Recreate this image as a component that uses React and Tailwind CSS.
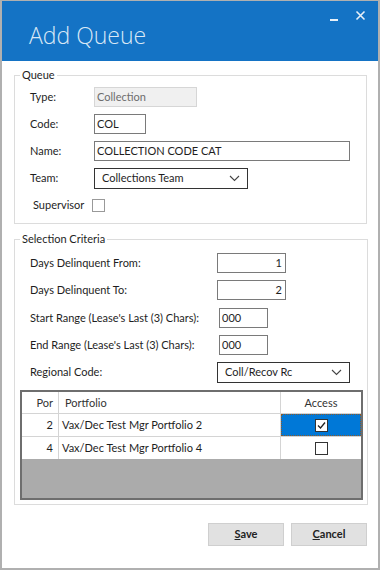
import React from "react";

function Row({ label, labelW, children, mb = "mb-[7px]" }) {
  return (
    <div className={`flex items-center h-[20px] ${mb}`}>
      <div className="shrink-0" style={{ width: labelW }}>
        {label}
      </div>
      {children}
    </div>
  );
}

function Check({ checked }) {
  return (
    <div className="w-[13px] h-[13px] border border-[#333] bg-white flex items-center justify-center">
      {checked && (
        <svg width="11" height="11" viewBox="0 0 11 11">
          <path d="M2 5.5 L4.5 8 L9 2.5" fill="none" stroke="#222" strokeWidth="1.3" />
        </svg>
      )}
    </div>
  );
}

function Chevron() {
  return (
    <svg width="11" height="7" viewBox="0 0 11 7" className="ml-auto mr-[7px]">
      <path d="M1 1 L5.5 5.5 L10 1" fill="none" stroke="#444" strokeWidth="1.1" />
    </svg>
  );
}

export default function App() {
  return (
    <div className="w-[380px] h-[570px] bg-white border-x-2 border-b-2 border-t border-[#b0b0b0] flex flex-col font-['Lato',sans-serif] text-[11px] text-[#1e1e1e] overflow-hidden">
      <div className="h-[60px] bg-[#1473c5] shrink-0 relative flex items-end pl-[27px] pb-[14px]">
        <span className="font-['Open_Sans',sans-serif] text-[23px] font-light leading-none text-[#d9e8f6]">Add Queue</span>
        <div className="absolute top-[9px] right-[12px] flex items-center gap-[17px] text-[#e8f0f8]">
          <div className="w-[8px] h-[2px] bg-[#e8f0f8] mt-[8px]" />
          <svg width="11" height="11" viewBox="0 0 11 11">
            <path d="M1.5 1.5 L9.5 9.5 M9.5 1.5 L1.5 9.5" stroke="#e8f0f8" strokeWidth="1.6" />
          </svg>
        </div>
      </div>

      <fieldset className="ml-[12px] mt-[6px] w-[353px] border border-[#dcdcdc] pl-[15px] pr-[15px] pb-[11px]">
        <legend className="-ml-[10px] px-[2px] leading-[16px]">Queue</legend>
        <div className="mt-[4px]">
          <Row label="Type:" labelW={64}>
            <div className="w-[103px] h-[20px] bg-[#f0f0f0] border border-[#d6d6d6] text-[#6d6d6d] px-[2px] leading-[18px]">
              Collection
            </div>
          </Row>
          <Row label="Code:" labelW={64}>
            <div className="w-[52px] h-[20px] border border-[#7a7a7a] px-[2px] leading-[18px]">COL</div>
          </Row>
          <Row label="Name:" labelW={64}>
            <div className="w-[256px] h-[20px] border border-[#7a7a7a] px-[2px] leading-[18px]">
              COLLECTION CODE CAT
            </div>
          </Row>
          <Row label="Team:" labelW={64} mb="mb-[10px]">
            <div className="w-[154px] h-[21px] border border-[#333] flex items-center pl-[7px]">
              Collections Team
              <Chevron />
            </div>
          </Row>
          <div className="flex items-center h-[14px] pl-[3px]">
            <span>Supervisor</span>
            <div className="ml-[8px] w-[13px] h-[13px] border border-[#999] bg-white" />
          </div>
        </div>
      </fieldset>

      <fieldset className="ml-[12px] mt-[7px] w-[353px] border border-[#dcdcdc] pl-[15px] pr-[4px] pb-[4px]">
        <legend className="-ml-[10px] px-[2px] leading-[16px]">Selection Criteria</legend>
        <div className="mt-[6px]">
          <Row label="Days Delinquent From:" labelW={187}>
            <div className="w-[69px] h-[20px] border border-[#7a7a7a] px-[3px] leading-[18px] text-right">1</div>
          </Row>
          <Row label="Days Delinquent To:" labelW={187} mb="mb-[8px]">
            <div className="w-[69px] h-[20px] border border-[#7a7a7a] px-[3px] leading-[18px] text-right">2</div>
          </Row>
          <Row label="Start Range (Lease's Last (3) Chars):" labelW={189}>
            <div className="w-[49px] h-[20px] border border-[#7a7a7a] px-[2px] leading-[18px]">000</div>
          </Row>
          <Row label="End Range (Lease's Last (3) Chars):" labelW={189}>
            <div className="w-[49px] h-[20px] border border-[#7a7a7a] px-[2px] leading-[18px]">000</div>
          </Row>
          <Row label="Regional Code:" labelW={187} mb="mb-[8px]">
            <div className="w-[133px] h-[21px] border border-[#333] flex items-center pl-[7px]">
              Coll/Recov Rc
              <Chevron />
            </div>
          </Row>
        </div>
        <div className="-ml-[10px] w-[343px] h-[110px] border-2 border-[#6e6e6e] bg-[#ababab] flex flex-col">
          <div className="flex h-[22px] bg-white border-b border-[#d4d4d4]">
            <div className="w-[37px] border-r border-[#d4d4d4] text-right pr-[5px] leading-[21px] text-[#333]">Por</div>
            <div className="w-[222px] border-r border-[#d4d4d4] pl-[6px] leading-[21px] text-[#333]">Portfolio</div>
            <div className="flex-1 text-center leading-[21px] text-[#333]">Access</div>
          </div>
          <div className="flex h-[23px] bg-white border-b border-[#d4d4d4]">
            <div className="w-[37px] border-r border-[#d4d4d4] text-right pr-[5px] leading-[22px]">2</div>
            <div className="w-[222px] border-r border-[#d4d4d4] pl-[3px] leading-[22px]">Vax/Dec Test Mgr Portfolio 2</div>
            <div className="flex-1 bg-[#0078d7] border border-dotted border-[#8a5a2a] flex items-center justify-center">
              <Check checked />
            </div>
          </div>
          <div className="flex h-[22px] bg-white">
            <div className="w-[37px] border-r border-[#d4d4d4] text-right pr-[5px] leading-[22px]">4</div>
            <div className="w-[222px] border-r border-[#d4d4d4] pl-[3px] leading-[22px]">Vax/Dec Test Mgr Portfolio 4</div>
            <div className="flex-1 flex items-center justify-center">
              <Check />
            </div>
          </div>
        </div>
      </fieldset>

      <div className="flex justify-end gap-[7px] mt-[18px] w-[365px]">
        <button className="w-[76px] h-[23px] bg-[#e1e1e1] border border-[#cfcfcf] font-bold text-[#222]">
          <span className="underline">S</span>ave
        </button>
        <button className="w-[76px] h-[23px] bg-[#e1e1e1] border border-[#cfcfcf] font-bold text-[#222]">
          <span className="underline">C</span>ancel
        </button>
      </div>
    </div>
  );
}
